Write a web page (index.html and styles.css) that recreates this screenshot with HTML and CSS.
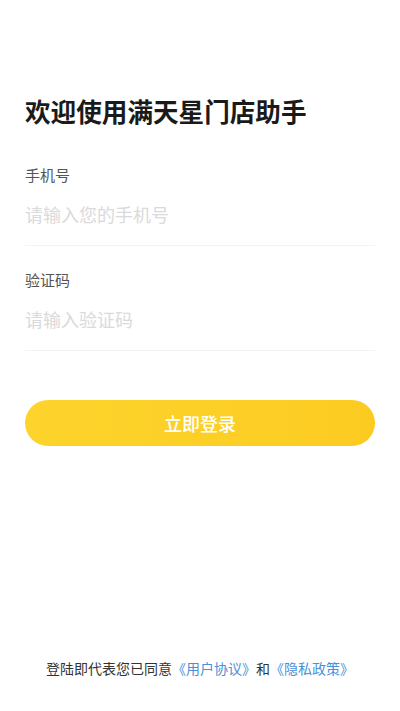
FILE: index.html
```html
<!DOCTYPE html>
<html lang="zh">
<head>
<meta charset="utf-8">
<link rel="stylesheet" href="styles.css">
</head>
<body>
<div class="page">
  <h1 class="title">欢迎使用满天星门店助手</h1>
  <div class="field field-first">
    <div class="label">手机号</div>
    <input class="input" type="text" placeholder="请输入您的手机号">
  </div>
  <div class="field">
    <div class="label">验证码</div>
    <input class="input" type="text" placeholder="请输入验证码">
  </div>
  <button class="login">立即登录</button>
  <div class="spacer"></div>
  <p class="agree">登陆即代表您已同意<span class="link">《用户协议》</span>和<span class="link">《隐私政策》</span></p>
</div>
</body>
</html>
```

FILE: styles.css
```css
html, body {
  margin: 0;
  padding: 0;
  background: #ffffff;
}
body {
  font-family: "Noto Sans CJK SC", "Noto Sans", sans-serif;
}
.page {
  box-sizing: border-box;
  height: 711px;
  padding: 93px 25px 0;
  display: flex;
  flex-direction: column;
}
.title {
  margin: 0;
  font-size: 25.6px;
  line-height: 35px;
  font-weight: 700;
  color: #1a1a1a;
}
.field {
  display: flex;
  flex-direction: column;
  border-bottom: 1px solid #f3f3f3;
  padding-bottom: 18px;
  margin-top: 24px;
}
.field-first {
  margin-top: 37px;
}
.label {
  font-size: 15px;
  line-height: 20px;
  color: #555555;
}
.input {
  margin-top: 17px;
  border: none;
  outline: none;
  padding: 0;
  font-family: inherit;
  font-size: 18px;
  line-height: 25px;
  height: 25px;
  color: #333;
  background: transparent;
}
.input::placeholder {
  color: #dadada;
}
.login {
  margin-top: 49px;
  height: 46px;
  border: none;
  border-radius: 23px;
  background: linear-gradient(90deg, #fdd42c, #fccb22);
  color: #ffffff;
  font-family: inherit;
  font-size: 18px;
  font-weight: 500;
  padding: 0;
}
.spacer {
  flex: 1;
}
.agree {
  margin: 0 0 33px;
  text-align: center;
  font-size: 14px;
  line-height: 20px;
  color: #333333;
}
.link {
  color: #4a90d9;
}
```
